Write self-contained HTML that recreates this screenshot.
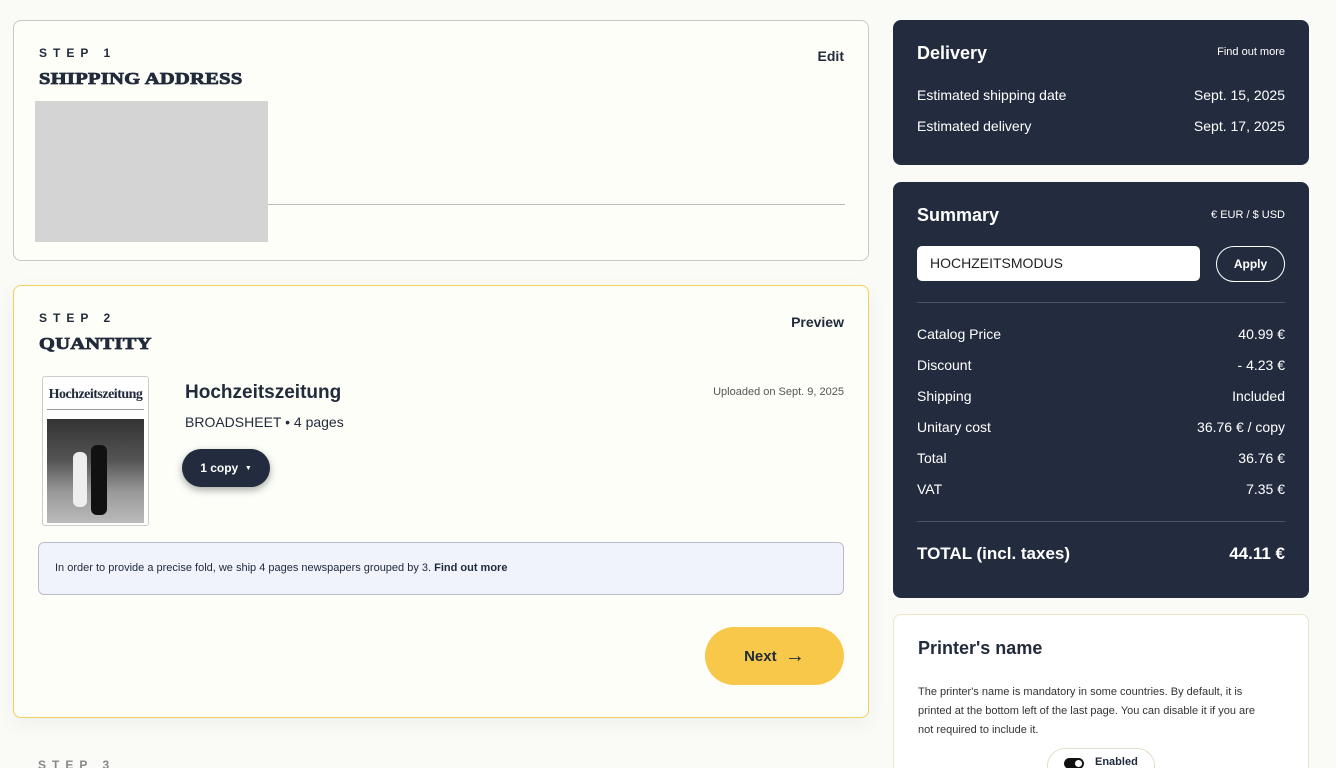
<!DOCTYPE html>
<html><head><meta charset="utf-8"><style>
*{box-sizing:border-box;margin:0;padding:0}
html,body{width:1336px;height:768px;overflow:hidden}
body{background:#fafaf7;font-family:"Liberation Sans",sans-serif;color:#222b3b;position:relative}
.card{position:absolute;border-radius:8px}
.step{font-size:12px;letter-spacing:6px;font-weight:600}
.title{font-family:"Liberation Serif",serif;font-weight:900;font-size:17px;letter-spacing:0.3px;-webkit-text-stroke:0.8px #222b3b;transform:scaleX(1.2);transform-origin:left}
.dark{background:#232c3e;color:#fff}
.row{display:flex;justify-content:space-between;font-size:14px}
</style></head><body>
<div class="card" style="left:13px;top:20px;width:856px;height:241px;border:1px solid #c9c9c2;background:#fefef9">
  <div class="step" style="position:absolute;left:25px;top:25px">STEP 1</div>
  <div class="title" style="position:absolute;left:25px;top:48px">SHIPPING ADDRESS</div>
  <div style="position:absolute;right:24px;top:27px;font-weight:700;font-size:14px">Edit</div>
  <div style="position:absolute;left:21px;top:80px;width:233px;height:141px;background:#d4d4d4"></div>
  <div style="position:absolute;left:254px;top:183px;width:577px;height:1px;background:#bbb"></div>
</div>
<div class="card" style="left:13px;top:285px;width:856px;height:433px;border:1px solid #f0cf5a;background:#fefef9;box-shadow:0 6px 20px rgba(0,0,0,.05)">
  <div class="step" style="position:absolute;left:25px;top:25px">STEP 2</div>
  <div class="title" style="position:absolute;left:25px;top:48px">QUANTITY</div>
  <div style="position:absolute;right:24px;top:28px;font-weight:700;font-size:14px">Preview</div>
  <div style="position:absolute;left:28px;top:90px;width:107px;height:150px;border:1px solid #ccc;border-radius:3px;background:#fff;overflow:hidden">
    <div style="font-family:'Liberation Serif',serif;font-weight:700;font-size:14px;text-align:center;margin-top:10px;letter-spacing:-0.5px">Hochzeitszeitung</div>
    <div style="height:1px;background:#999;margin:6px 4px 0"></div>
    <div style="position:absolute;left:4px;top:42px;width:97px;height:104px;background:linear-gradient(#333,#555 40%,#999 70%,#bbb)"></div>
    <div style="position:absolute;left:30px;top:75px;width:14px;height:55px;background:#eee;border-radius:6px"></div>
    <div style="position:absolute;left:48px;top:68px;width:16px;height:70px;background:#111;border-radius:6px"></div>
  </div>
  <div style="position:absolute;left:171px;top:96px;font-size:19px;font-weight:700">Hochzeitszeitung</div>
  <div style="position:absolute;left:171px;top:128px;font-size:14px">BROADSHEET • 4 pages</div>
  <div style="position:absolute;left:168px;top:163px;width:88px;height:38px;border-radius:19px;background:#232c3e;color:#fff;font-size:12px;font-weight:700;line-height:38px;text-align:center;box-shadow:0 3px 8px rgba(0,0,0,.35)">1 copy &nbsp;<span style="font-size:7px;vertical-align:2px">▼</span></div>
  <div style="position:absolute;right:24px;top:100px;font-size:11px;color:#555">Uploaded on Sept. 9, 2025</div>
  <div style="position:absolute;left:24px;top:256px;width:806px;height:53px;border:1px solid #b9bdc9;border-radius:6px;background:#f0f3fb;font-size:11px;line-height:51px;padding-left:16px">In order to provide a precise fold, we ship 4 pages newspapers grouped by 3. <b>Find out more</b></div>
  <div style="position:absolute;left:691px;top:341px;width:139px;height:58px;border-radius:29px;background:#f8c84a;font-weight:700;font-size:15px;line-height:58px;text-align:center">Next &nbsp;<span style="font-size:20px;vertical-align:-1px">→</span></div>
</div>
<div class="step" style="position:absolute;left:38px;top:758px;color:#888">STEP 3</div>

<div class="card dark" style="left:893px;top:20px;width:416px;height:145px">
  <div style="position:absolute;left:24px;top:23px;font-size:18px;font-weight:700">Delivery</div>
  <div style="position:absolute;right:24px;top:26px;font-size:11px">Find out more</div>
  <div class="row" style="position:absolute;left:24px;right:24px;top:67px"><span>Estimated shipping date</span><span>Sept. 15, 2025</span></div>
  <div class="row" style="position:absolute;left:24px;right:24px;top:98px"><span>Estimated delivery</span><span>Sept. 17, 2025</span></div>
</div>
<div class="card dark" style="left:893px;top:182px;width:416px;height:416px">
  <div style="position:absolute;left:24px;top:23px;font-size:18px;font-weight:700">Summary</div>
  <div style="position:absolute;right:24px;top:27px;font-size:11px">€ EUR / $ USD</div>
  <div style="position:absolute;left:24px;top:64px;width:283px;height:35px;background:#fff;border-radius:5px;color:#222;font-size:14px;line-height:35px;padding-left:13px">HOCHZEITSMODUS</div>
  <div style="position:absolute;left:323px;top:64px;width:69px;height:36px;border:1px solid #fff;border-radius:18px;font-size:12px;font-weight:700;line-height:34px;text-align:center">Apply</div>
  <div style="position:absolute;left:24px;right:24px;top:120px;height:1px;background:#4a5366"></div>
  <div class="row" style="position:absolute;left:24px;right:24px;top:144px"><span>Catalog Price</span><span>40.99 €</span></div>
  <div class="row" style="position:absolute;left:24px;right:24px;top:175px"><span>Discount</span><span>- 4.23 €</span></div>
  <div class="row" style="position:absolute;left:24px;right:24px;top:206px"><span>Shipping</span><span>Included</span></div>
  <div class="row" style="position:absolute;left:24px;right:24px;top:237px"><span>Unitary cost</span><span>36.76 € / copy</span></div>
  <div class="row" style="position:absolute;left:24px;right:24px;top:268px"><span>Total</span><span>36.76 €</span></div>
  <div class="row" style="position:absolute;left:24px;right:24px;top:299px"><span>VAT</span><span>7.35 €</span></div>
  <div style="position:absolute;left:24px;right:24px;top:339px;height:1px;background:#4a5366"></div>
  <div class="row" style="position:absolute;left:24px;right:24px;top:362px;font-size:17px;font-weight:700"><span>TOTAL (incl. taxes)</span><span>44.11 €</span></div>
</div>
<div class="card" style="left:893px;top:614px;width:416px;height:170px;border:1px solid #ece6c8;background:#fff">
  <div style="position:absolute;left:24px;top:23px;font-size:18px;font-weight:700">Printer's name</div>
  <div style="position:absolute;left:24px;top:68px;width:350px;font-size:11px;line-height:19px;color:#333">The printer's name is mandatory in some countries. By default, it is printed at the bottom left of the last page. You can disable it if you are not required to include it.</div>
  <div style="position:absolute;left:153px;top:133px;width:108px;height:36px;border:1px solid #e4dfc8;border-radius:18px;font-size:11px;font-weight:700;padding:7px 0 0 47px">Enabled
    <span style="position:absolute;left:16px;top:9px;width:20px;height:11px;border-radius:6px;background:#111"><span style="position:absolute;right:2px;top:2px;width:7px;height:7px;border-radius:50%;background:#fff"></span></span></div>
</div>
</body></html>
